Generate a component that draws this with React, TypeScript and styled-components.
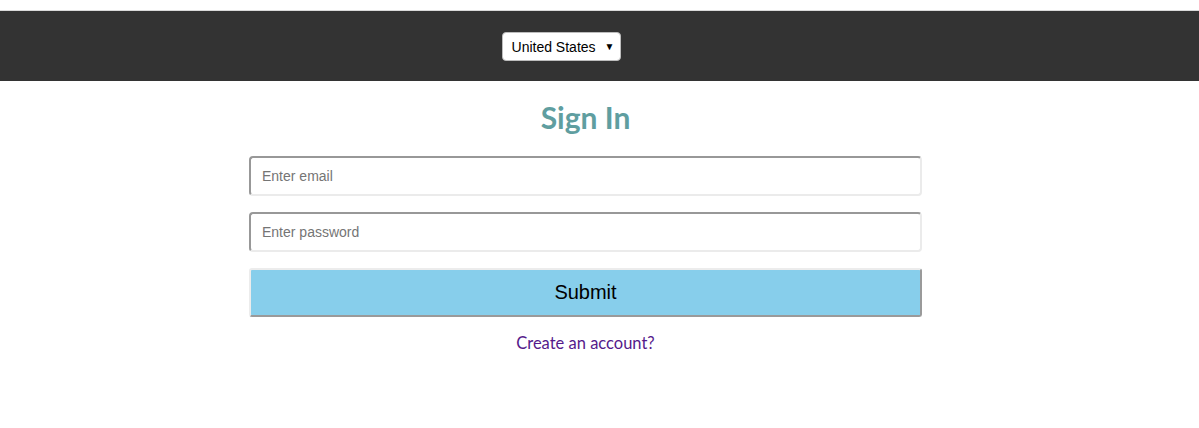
import React from "react";
import styled, { createGlobalStyle } from "styled-components";

const GlobalStyle = createGlobalStyle`
  html, body { margin: 0; padding: 0; background: #fff; }
  body { font-family: "Liberation Sans", Arial, sans-serif; }
`;

const Page = styled.div`
  padding-top: 10px;
`;

const TopBar = styled.header`
  height: 70px;
  background: #333333;
  border-top: 1px solid #d9d9d9;
  display: flex;
  align-items: center;
  justify-content: center;
  padding-right: 76px;
`;

const CountrySelect = styled.div`
  display: flex;
  align-items: center;
  gap: 9px;
  height: 27px;
  padding: 0 6px 0 9px;
  background: #fff;
  border: 1px solid #bdbdbd;
  border-radius: 4px;
  font-family: "Liberation Sans", Arial, sans-serif;
  font-size: 14px;
  color: #000;
  margin-top: 1px;
`;

const Arrow = styled.span`
  font-size: 10px;
  line-height: 1;
`;

const Main = styled.main`
  width: 1171px;
  display: flex;
  flex-direction: column;
  align-items: center;
`;

const Title = styled.h1`
  margin: 17px 0 20px;
  font-family: Lato, sans-serif;
  font-weight: 700;
  font-size: 30px;
  line-height: 38px;
  color: #5f9ea0;
`;

const Form = styled.form`
  width: 673px;
  display: flex;
  flex-direction: column;
  gap: 16px;
`;

const Field = styled.input`
  box-sizing: border-box;
  width: 100%;
  height: 40px;
  padding: 0 11px;
  border-width: 2px;
  border-style: solid;
  border-color: #989898 #ebebeb #ebebeb #989898;
  border-radius: 4px;
  font-family: "Liberation Sans", Arial, sans-serif;
  font-size: 14px;
  color: #333;
  outline: none;
  &::placeholder { color: #757575; }
`;

const SubmitButton = styled.button`
  box-sizing: border-box;
  width: 100%;
  height: 49px;
  background: #87ceeb;
  border-width: 2px;
  border-style: solid;
  border-color: #ececec #9a9a9a #9a9a9a #ececec;
  border-radius: 3px;
  font-family: "Liberation Sans", Arial, sans-serif;
  font-size: 20px;
  color: #000;
`;

const AccountLink = styled.a`
  margin-top: 16px;
  font-family: Lato, sans-serif;
  font-size: 16.5px;
  color: #551a8b;
  text-decoration: none;
`;

export default function App() {
  return (
    <Page>
      <GlobalStyle />
      <TopBar>
        <CountrySelect>
          <span>United States</span>
          <Arrow>▼</Arrow>
        </CountrySelect>
      </TopBar>
      <Main>
        <Title>Sign In</Title>
        <Form onSubmit={(e) => e.preventDefault()}>
          <Field type="email" placeholder="Enter email" />
          <Field type="password" placeholder="Enter password" />
          <SubmitButton type="submit">Submit</SubmitButton>
        </Form>
        <AccountLink href="#">Create an account?</AccountLink>
      </Main>
    </Page>
  );
}
